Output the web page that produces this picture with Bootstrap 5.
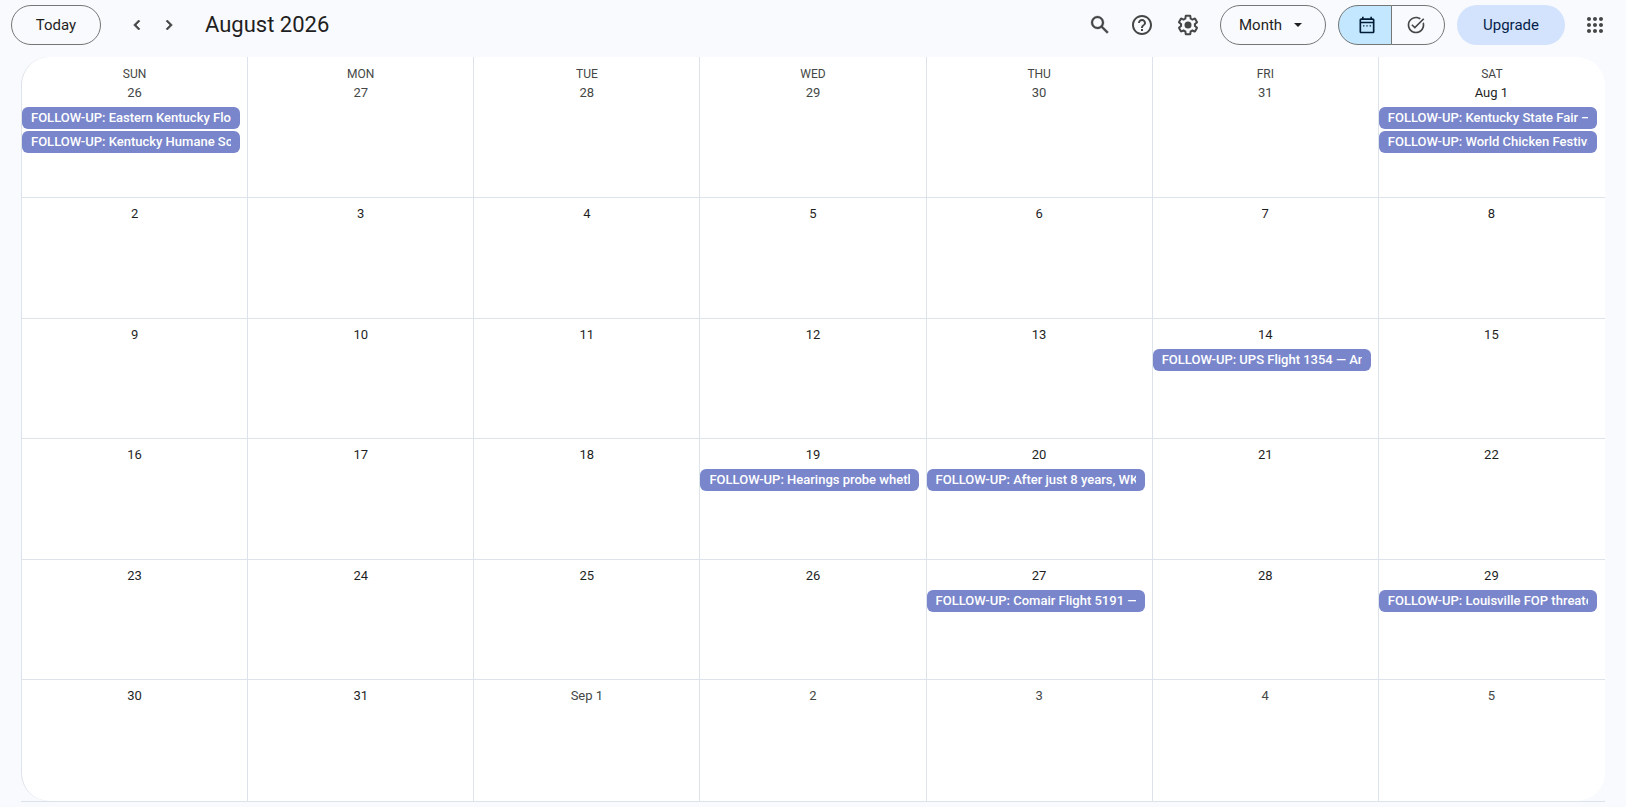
<!DOCTYPE html>
<html lang="en">
<head>
<meta charset="utf-8">
<meta name="viewport" content="width=device-width, initial-scale=1">
<title>Calendar - August 2026</title>
<link rel="stylesheet" href="https://cdn.jsdelivr.net/npm/bootstrap@5.3.0/dist/css/bootstrap.min.css">
<style>
  body { background: #f8fafd; color: #1f1f1f; font-family: Roboto, "Liberation Sans", sans-serif; font-size: 14px; }
  svg { fill: currentColor; display: block; }
  .topbar { padding: 5px 11px 12px; }
  .btn { --bs-btn-font-size: 15px; --bs-btn-font-weight: 400; --bs-btn-line-height: 20px; }
  .btn-line { height: 40px; border: 1px solid #747775; color: #1f1f1f; }
  .btn-today { width: 90px; margin-right: 20px; padding: 0; }
  .btn-step { width: 32px; height: 32px; padding: 6px; color: #444746; border: 0; }
  .btn-round { width: 40px; height: 40px; padding: 8px; color: #444746; border: 0; }
  .btn-help { margin: 0 6px 0 2px; }
  .btn-apps { margin-left: 10px; }
  .month-title { font-size: 22px; line-height: 28px; margin: 0 0 0 20px; font-weight: 400; }
  .btn-month { width: 106px; margin-left: 12px; padding: 0 12px 0 18px; }
  .view-switch { margin-left: 12px; }
  .view-switch .btn { width: 54px; padding: 0 14px; color: #444746; }
  .view-switch .btn.active { padding: 0 18px; background: #c2e7ff; border-color: #747775; color: #001d35; }
  .btn-upgrade { width: 108px; height: 40px; margin-left: 12px; padding: 0; background: #d3e3fd; color: #041e49; border: 0; }
  .month-frame { margin: 0 21px; border-bottom: 1px solid #dde3ea; }
  .month-sheet { background: #fff; border-left: 1px solid #dde3ea; border-radius: 28px; overflow: hidden; }
  .month-grid { width: 100%; table-layout: fixed; border-collapse: separate; border-spacing: 0; }
  .month-grid th, .month-grid td { border-right: 1px solid #dde3ea; text-align: center; vertical-align: top; }
  .month-grid th:last-child, .month-grid td:last-child { border-right: 0; }
  .month-grid th { height: 24px; padding: 10px 0 0; font-size: 12px; line-height: 14px; font-weight: 400; color: #444746; }
  .month-grid td { height: calc((100vh - 204px) / 5); padding: 8px 7px 0 0; border-bottom: 1px solid #dde3ea; }
  .month-grid td:last-child { padding-right: 8px; }
  .month-grid tbody tr:first-child td { height: 117px; padding-top: 4px; }
  .month-grid tbody tr:last-child td { border-bottom: 0; }
  .day { display: block; margin: 0 -7px 6px 0; font-size: 13px; line-height: 16px; }
  .day-other { color: #444746; }
  .event { display: block; height: 22px; margin-bottom: 2px; padding: 0 9px; border-radius: 6px; background: #7986cb; color: #fff; font-size: 13px; line-height: 22px; font-weight: 500; text-align: left; text-decoration: none; }
  .event span { display: block; overflow: hidden; white-space: nowrap; }
</style>
</head>
<body>
<header class="topbar d-flex align-items-center">
  <button type="button" class="btn btn-line btn-today rounded-pill">Today</button>
  <button type="button" class="btn btn-step rounded-circle" aria-label="Previous month"><svg width="20" height="20" viewBox="0 0 24 24"><path d="M15.41 7.41 14 6l-6 6 6 6 1.41-1.41L10.83 12z" stroke="currentColor" stroke-width=".8"/></svg></button>
  <button type="button" class="btn btn-step rounded-circle" aria-label="Next month"><svg width="20" height="20" viewBox="0 0 24 24"><path d="M10 6 8.59 7.41 13.17 12l-4.58 4.59L10 18l6-6z" stroke="currentColor" stroke-width=".8"/></svg></button>
  <h1 class="month-title">August 2026</h1>
  <div class="d-flex align-items-center ms-auto">
    <button type="button" class="btn btn-round rounded-circle" aria-label="Search"><svg width="24" height="24" viewBox="0 0 24 24"><path d="M20.49 19l-5.73-5.73C15.53 12.2 16 10.91 16 9.5A6.5 6.5 0 1 0 9.5 16c1.41 0 2.7-.47 3.77-1.24L19 20.49 20.49 19zM5 9.5C5 7.01 7.01 5 9.5 5S14 7.01 14 9.5 11.99 14 9.5 14 5 11.99 5 9.5z" stroke="currentColor" stroke-width=".3"/></svg></button>
    <button type="button" class="btn btn-round btn-help rounded-circle" aria-label="Support"><svg width="24" height="24" viewBox="0 0 24 24"><path d="M11 18h2v-2h-2v2zm1-16C6.48 2 2 6.48 2 12s4.48 10 10 10 10-4.48 10-10S17.52 2 12 2zm0 18c-4.41 0-8-3.59-8-8s3.59-8 8-8 8 3.59 8 8-3.59 8-8 8zm0-14c-2.21 0-4 1.79-4 4h2c0-1.1.9-2 2-2s2 .9 2 2c0 2-3 1.75-3 5h2c0-2.25 3-2.5 3-5 0-2.21-1.79-4-4-4z"/></svg></button>
    <button type="button" class="btn btn-round rounded-circle" aria-label="Settings"><svg width="24" height="24" viewBox="0 0 24 24"><path d="M13.85 22.25h-3.7c-.74 0-1.36-.54-1.45-1.27l-.27-1.89c-.27-.14-.53-.29-.79-.46l-1.8.72c-.7.26-1.47-.03-1.81-.65L2.2 15.53c-.35-.66-.2-1.44.36-1.88l1.53-1.19c-.01-.15-.02-.3-.02-.46 0-.15.01-.31.02-.46l-1.52-1.19c-.59-.45-.74-1.26-.37-1.88l1.85-3.19c.34-.62 1.11-.9 1.79-.63l1.81.73c.26-.17.52-.32.78-.46l.27-1.91c.09-.7.71-1.25 1.44-1.25h3.7c.74 0 1.36.54 1.45 1.27l.27 1.89c.27.14.53.29.79.46l1.8-.72c.71-.26 1.48.03 1.82.65l1.84 3.18c.36.66.2 1.44-.36 1.88l-1.52 1.19c.01.15.02.3.02.46s-.01.31-.02.46l1.52 1.19c.56.45.72 1.23.37 1.86l-1.86 3.22c-.34.62-1.11.9-1.8.63l-1.8-.72c-.26.17-.52.32-.78.46l-.27 1.91c-.1.68-.72 1.22-1.46 1.22zm-3.23-2h2.76l.37-2.55.53-.22c.44-.18.88-.44 1.34-.78l.45-.34 2.38.96 1.38-2.4-2.03-1.58.07-.56c.03-.26.06-.51.06-.78s-.03-.53-.06-.78l-.07-.56 2.03-1.58-1.39-2.4-2.39.96-.45-.35c-.42-.32-.87-.58-1.33-.77l-.52-.22-.37-2.55h-2.76l-.37 2.55-.53.21c-.44.19-.88.44-1.34.79l-.45.33-2.38-.95-1.39 2.39 2.03 1.58-.07.56a7 7 0 0 0-.06.79c0 .26.02.53.06.78l.07.56-2.03 1.58 1.38 2.4 2.39-.96.45.35c.43.33.86.58 1.33.77l.53.22.38 2.55z"/><circle cx="12" cy="12" r="3.5"/></svg></button>
    <button type="button" class="btn btn-line btn-month rounded-pill d-flex align-items-center justify-content-between" aria-haspopup="menu">Month<svg width="30" height="20" viewBox="0 0 30 20"><path d="M11 8h8l-4 4z"/></svg></button>
    <div class="btn-group view-switch" role="group" aria-label="View">
      <button type="button" class="btn btn-line active rounded-start-pill" aria-label="Calendar"><svg width="20" height="20" viewBox="0 0 24 24"><path d="M19 4h-1V2h-2v2H8V2H6v2H5c-1.100 0-2 .9-2 2v14c0 1.100.9 2 2 2h14c1.100 0 2-.9 2-2V6c0-1.100-.9-2-2-2zm0 16H5V10h14v10zm0-12H5V6h14v2zM7.300 12.200h1.600v1.600H7.300zm3.900 0h1.600v1.600h-1.600zm3.900 0h1.600v1.600h-1.600z"/></svg></button>
      <button type="button" class="btn btn-line rounded-end-pill" aria-label="Tasks"><svg width="20" height="20" viewBox="0 0 24 24"><path d="M22 5.180 10.590 16.600l-4.240-4.240 1.410-1.410 2.830 2.830 10-10zM19.790 10.220c.13.57.21 1.170.21 1.780 0 4.420-3.580 8-8 8s-8-3.580-8-8 3.580-8 8-8c1.580 0 3.040.46 4.280 1.250l1.440-1.440C16.100 2.670 14.130 2 12 2 6.480 2 2 6.480 2 12s4.480 10 10 10 10-4.480 10-10c0-1.190-.22-2.330-.6-3.390z"/></svg></button>
    </div>
    <button type="button" class="btn btn-upgrade rounded-pill">Upgrade</button>
    <button type="button" class="btn btn-round btn-apps rounded-circle" aria-label="Google apps"><svg width="24" height="24" viewBox="0 0 24 24"><path d="M6 8c1.100 0 2-.9 2-2s-.9-2-2-2-2 .9-2 2 .9 2 2 2zm6 12c1.100 0 2-.9 2-2s-.9-2-2-2-2 .9-2 2 .9 2 2 2zm-6 0c1.100 0 2-.9 2-2s-.9-2-2-2-2 .9-2 2 .9 2 2 2zm0-6c1.100 0 2-.9 2-2s-.9-2-2-2-2 .9-2 2 .9 2 2 2zm6 0c1.100 0 2-.9 2-2s-.9-2-2-2-2 .9-2 2 .9 2 2 2zm4-8c0 1.100.9 2 2 2s2-.9 2-2-.9-2-2-2-2 .9-2 2zm-4 2c1.100 0 2-.9 2-2s-.9-2-2-2-2 .9-2 2 .9 2 2 2zm6 6c1.100 0 2-.9 2-2s-.9-2-2-2-2 .9-2 2 .9 2 2 2zm0 6c1.100 0 2-.9 2-2s-.9-2-2-2-2 .9-2 2 .9 2 2 2z"/></svg></button>
  </div>
</header>
<main class="month-frame">
  <div class="month-sheet">
    <table class="month-grid">
      <thead>
        <tr><th scope="col">SUN</th><th scope="col">MON</th><th scope="col">TUE</th><th scope="col">WED</th><th scope="col">THU</th><th scope="col">FRI</th><th scope="col">SAT</th></tr>
      </thead>
      <tbody>
        <tr>
          <td><span class="day day-other">26</span><a class="event" href="#"><span>FOLLOW-UP: Eastern Kentucky Floo</span></a><a class="event" href="#"><span>FOLLOW-UP: Kentucky Humane Soc</span></a></td>
          <td><span class="day day-other">27</span></td>
          <td><span class="day day-other">28</span></td>
          <td><span class="day day-other">29</span></td>
          <td><span class="day day-other">30</span></td>
          <td><span class="day day-other">31</span></td>
          <td><span class="day">Aug 1</span><a class="event" href="#"><span>FOLLOW-UP: Kentucky State Fair —</span></a><a class="event" href="#"><span>FOLLOW-UP: World Chicken Festiva</span></a></td>
        </tr>
        <tr>
          <td><span class="day">2</span></td>
          <td><span class="day">3</span></td>
          <td><span class="day">4</span></td>
          <td><span class="day">5</span></td>
          <td><span class="day">6</span></td>
          <td><span class="day">7</span></td>
          <td><span class="day">8</span></td>
        </tr>
        <tr>
          <td><span class="day">9</span></td>
          <td><span class="day">10</span></td>
          <td><span class="day">11</span></td>
          <td><span class="day">12</span></td>
          <td><span class="day">13</span></td>
          <td><span class="day">14</span><a class="event" href="#"><span>FOLLOW-UP: UPS Flight 1354 — Ann</span></a></td>
          <td><span class="day">15</span></td>
        </tr>
        <tr>
          <td><span class="day">16</span></td>
          <td><span class="day">17</span></td>
          <td><span class="day">18</span></td>
          <td><span class="day">19</span><a class="event" href="#"><span>FOLLOW-UP: Hearings probe wheth</span></a></td>
          <td><span class="day">20</span><a class="event" href="#"><span>FOLLOW-UP: After just 8 years, WKU</span></a></td>
          <td><span class="day">21</span></td>
          <td><span class="day">22</span></td>
        </tr>
        <tr>
          <td><span class="day">23</span></td>
          <td><span class="day">24</span></td>
          <td><span class="day">25</span></td>
          <td><span class="day">26</span></td>
          <td><span class="day">27</span><a class="event" href="#"><span>FOLLOW-UP: Comair Flight 5191 — A</span></a></td>
          <td><span class="day">28</span></td>
          <td><span class="day">29</span><a class="event" href="#"><span>FOLLOW-UP: Louisville FOP threate</span></a></td>
        </tr>
        <tr>
          <td><span class="day">30</span></td>
          <td><span class="day">31</span></td>
          <td><span class="day day-other">Sep 1</span></td>
          <td><span class="day day-other">2</span></td>
          <td><span class="day day-other">3</span></td>
          <td><span class="day day-other">4</span></td>
          <td><span class="day day-other">5</span></td>
        </tr>
      </tbody>
    </table>
  </div>
</main>
<script src="https://cdn.jsdelivr.net/npm/bootstrap@5.3.0/dist/js/bootstrap.bundle.min.js"></script>
</body>
</html>
